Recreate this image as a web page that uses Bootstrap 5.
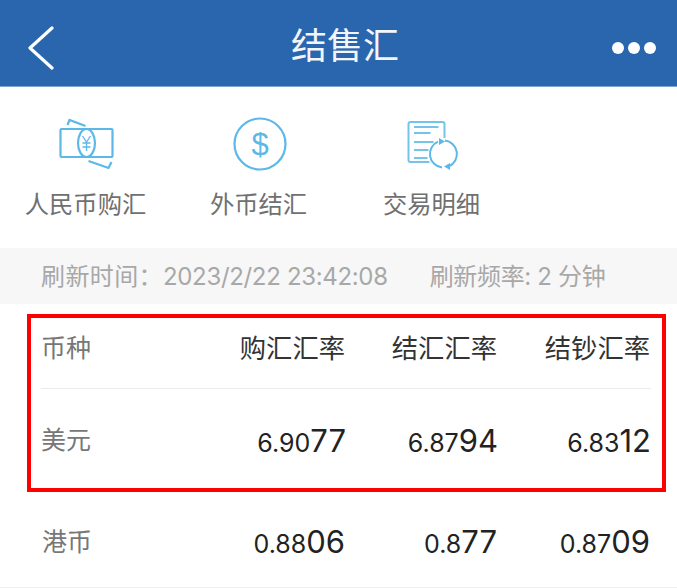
<!DOCTYPE html>
<html lang="zh">
<head>
<meta charset="utf-8">
<link href="https://cdn.jsdelivr.net/npm/bootstrap@5.3.0/dist/css/bootstrap.min.css" rel="stylesheet">
<style>
html,body{height:588px;overflow:hidden;background:#fff}
body{font-family:Inter,"Noto Sans CJK SC",sans-serif;color:#222}
.app-head{height:87px;background:#2a66ad;border-bottom:1px solid #7fa3cf;padding:9px 21px 0 28px}
.head-title{font-size:36px;color:#f2f5fa;font-weight:400;line-height:1;margin:0 0 9px;font-family:"Noto Sans CJK SC",sans-serif}
.slot-l{width:66px}
.slot-r{width:60px;gap:4px}
.slot-l svg{display:block}
.dot{width:12px;height:12px;border-radius:50%;background:#fff}
.quick-row{height:161px;gap:2px}
.quick-item{width:171px;color:#707070;font-size:24.3px;line-height:1;padding-top:30px}
.quick-item svg{display:block;margin-bottom:19px}
.refresh-bar{height:56px;background:#f7f7f7;color:#a8a8a8;font-size:24px;padding-left:41px;padding-top:1px;gap:42px;white-space:nowrap}
.refresh-cn{letter-spacing:.4px}
.refresh-num{letter-spacing:-.33px}
.rate-frame{margin:10px 11px 0 27px;height:178px;border:4.5px solid #f00;padding:0 11px 0 10px}
.rate-head{height:71px;border-bottom:1px solid #ebebeb;padding-bottom:8px}
.rate-body{height:98px;padding-top:6px}
.rate-name{flex:1 1 0;color:#777;font-size:25px}
.rate-c{text-align:right;white-space:nowrap;color:#222;font-size:25px}
.rate-head .rate-c{font-size:26.3px;color:#333;padding-right:1px}
.c1{width:160px}.c2{width:152px}.c3{width:153px}
.big{font-size:31px}
.rate-next{padding:6px 27px 0 42px;height:96px;border-bottom:1px solid #eee}
</style>
</head>
<body>
<header class="app-head d-flex align-items-center justify-content-between">
  <div class="slot-l">
    <svg width="26" height="44" viewBox="0 0 26 44"><path d="M24 2 L2 22 L24 42" fill="none" stroke="#fff" stroke-width="3.2" stroke-linecap="round" stroke-linejoin="round"/></svg>
  </div>
  <h1 class="head-title">结售汇</h1>
  <div class="slot-r d-flex justify-content-end"><span class="dot"></span><span class="dot"></span><span class="dot"></span></div>
</header>
<nav class="quick-row d-flex">
  <a class="quick-item d-flex flex-column align-items-center text-decoration-none">
    <svg width="60" height="56" viewBox="0 0 60 56" fill="none" stroke="#5cb8e6" stroke-width="2.2"><path d="M11.5 8 L13.5 3 L29.5 9"/><path d="M32.5 44 L52.5 51 L55.5 45"/><rect x="4.5" y="12" width="52" height="28" rx="1"/><ellipse cx="30.5" cy="26" rx="8.5" ry="14"/><path d="M26.5 19 L30.5 25 L34.5 19 M30.5 25 V34 M26.5 26 H34.5 M26.5 30 H34.5" stroke-width="1.3"/></svg>
    <span>人民币购汇</span>
  </a>
  <a class="quick-item d-flex flex-column align-items-center text-decoration-none">
    <svg width="60" height="56" viewBox="0 0 60 56" fill="none"><circle cx="31" cy="27" r="25.5" stroke="#5cb8e6" stroke-width="2.2"/><text x="31" y="38" text-anchor="middle" font-size="31" fill="#5cb8e6" font-family="Liberation Sans">$</text></svg>
    <span>外币结汇</span>
  </a>
  <a class="quick-item d-flex flex-column align-items-center text-decoration-none">
    <svg width="60" height="56" viewBox="0 0 60 56" fill="none" stroke="#74c4ea" stroke-width="2"><path d="M42.5 21 V7 a2 2 0 0 0 -2 -2 H8.5 a2 2 0 0 0 -2 2 V43 a2 2 0 0 0 2 2 H27.5"/><path d="M12 10 H36.5 M12 16 H28.5 M12 25 H31.5 M12 33 H26.5 M12 41 H25.5"/><path d="M43 23.6 A13.5 13.5 0 0 1 47 49.3 M40 50.4 A13.5 13.5 0 0 1 36 24.6" stroke="#5cb8e6"/><path d="M37 21 L43 24.5 L37 28 Z M48 46 L42 49.5 L48 53 Z" fill="#5cb8e6" stroke="none"/></svg>
    <span>交易明细</span>
  </a>
</nav>
<div class="refresh-bar d-flex align-items-center">
  <span><span class="refresh-cn">刷新时间：</span><span class="refresh-num">2023/2/22 23:42:08</span></span>
  <span class="refresh-num">刷新频率: 2 分钟</span>
</div>
<section class="rate-frame">
  <div class="rate-head d-flex align-items-center">
    <span class="rate-name">币种</span><span class="rate-c c1">购汇汇率</span><span class="rate-c c2">结汇汇率</span><span class="rate-c c3">结钞汇率</span>
  </div>
  <div class="rate-body d-flex align-items-center">
    <span class="rate-name">美元</span><span class="rate-c c1">6.90<span class="big">77</span></span><span class="rate-c c2">6.87<span class="big">94</span></span><span class="rate-c c3">6.83<span class="big">12</span></span>
  </div>
</section>
<div class="rate-next d-flex align-items-center">
  <span class="rate-name">港币</span><span class="rate-c c1">0.88<span class="big">06</span></span><span class="rate-c c2">0.8<span class="big">77</span></span><span class="rate-c c3">0.87<span class="big">09</span></span>
</div>
</body>
</html>
